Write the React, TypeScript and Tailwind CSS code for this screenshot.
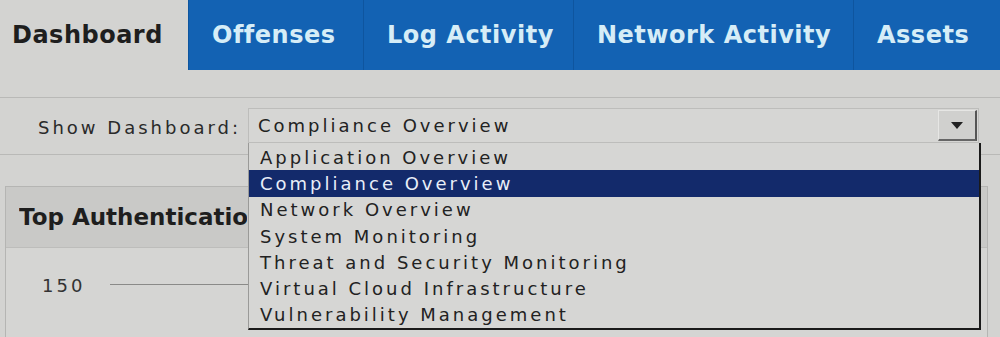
import React from 'react';

const tabs = [
  { label: 'Offenses', w: 'w-[175px]' },
  { label: 'Log Activity', w: 'w-[210px]' },
  { label: 'Network Activity', w: 'w-[280px]' },
  { label: 'Assets', w: 'flex-1' },
];

const options = [
  'Application Overview',
  'Compliance Overview',
  'Network Overview',
  'System Monitoring',
  'Threat and Security Monitoring',
  'Virtual Cloud Infrastructure',
  'Vulnerability Management',
];

const App = () => {
  return (
    <div
      className="w-[1000px] h-[337px] overflow-hidden bg-[#d3d3d1] text-[#222]"
      style={{ fontFamily: '"DejaVu Sans", Verdana, sans-serif' }}
    >
      {/* tab bar */}
      <div className="flex h-[70px]">
        <div className="w-[188px] flex items-center pl-[12px] text-[24px] tracking-[0.5px] font-bold text-[#1e1e1e]">
          Dashboard
        </div>
        <div className="flex flex-1 bg-[#1362b3]">
          {tabs.map((t) => (
            <div
              key={t.label}
              className={`${t.w} flex items-center pl-[23px] border-l border-[#0e559f] text-[24px] tracking-[0.5px] font-bold text-[#d6edf7] whitespace-nowrap`}
            >
              {t.label}
            </div>
          ))}
        </div>
      </div>

      {/* toolbar */}
      <div className="mt-[27px] border-t border-[#b9b9b7] border-b h-[58px] flex items-start pt-[10px]">
        <div className="w-[248px] pl-[38px] pt-[6px] text-[18px] tracking-[3px] text-[#2a2a2a] whitespace-nowrap">
          Show Dashboard:
        </div>
        <div className="relative w-[731px]">
          <div className="h-[35px] flex items-center justify-between bg-[#d6d6d4] border border-[#bdbdbb] pl-[9px] pr-[1px]">
            <span className="text-[18px] tracking-[3px] text-[#222] whitespace-nowrap">Compliance Overview</span>
            <div className="w-[39px] h-[31px] flex items-center justify-center bg-[#d0d0ce] border-t border-l border-[#e6e6e4] border-r-2 border-b-2 border-r-[#555] border-b-[#666]">
              <svg width="12" height="7" viewBox="0 0 12 7">
                <polygon points="0,0 12,0 6,7" fill="#222" />
              </svg>
            </div>
          </div>
          {/* open list */}
          <div className="absolute left-0 top-[35px] z-10 w-[733px] h-[187px] bg-[#d6d6d4] border-l border-[#9a9a98] border-r-2 border-r-[#1a1a1a] border-b-2 border-b-[#1a1a1a] pt-[1px]">
            {options.map((o) => (
              <div
                key={o}
                className={`h-[26.3px] flex items-center pl-[11px] text-[18px] tracking-[3px] whitespace-nowrap ${
                  o === 'Compliance Overview' ? 'bg-[#132a6b] text-[#e8eef8]' : 'text-[#222]'
                }`}
              >
                {o}
              </div>
            ))}
          </div>
        </div>
      </div>

      {/* dashboard panel */}
      <div className="mt-[31px] ml-[5px] mr-[12px] border border-[#b5b5b3]">
        <div className="h-[61px] bg-[#c9c9c7] flex items-center pl-[13px] border-b border-[#bdbdbb]">
          <span className="w-[228px] overflow-hidden whitespace-nowrap text-[23px] font-bold text-[#1e1e1e]">
            Top Authentication Failures by User
          </span>
        </div>
        <div className="h-[100px] bg-[#d5d5d3] pt-[24px] flex items-start">
          <span className="pl-[36px] w-[104px] text-[18px] tracking-[3px] text-[#333]">150</span>
          <div className="flex-1 mt-[12px] mr-[20px] border-t border-[#8a8a88]" />
        </div>
      </div>
    </div>
  );
};

export default App;
